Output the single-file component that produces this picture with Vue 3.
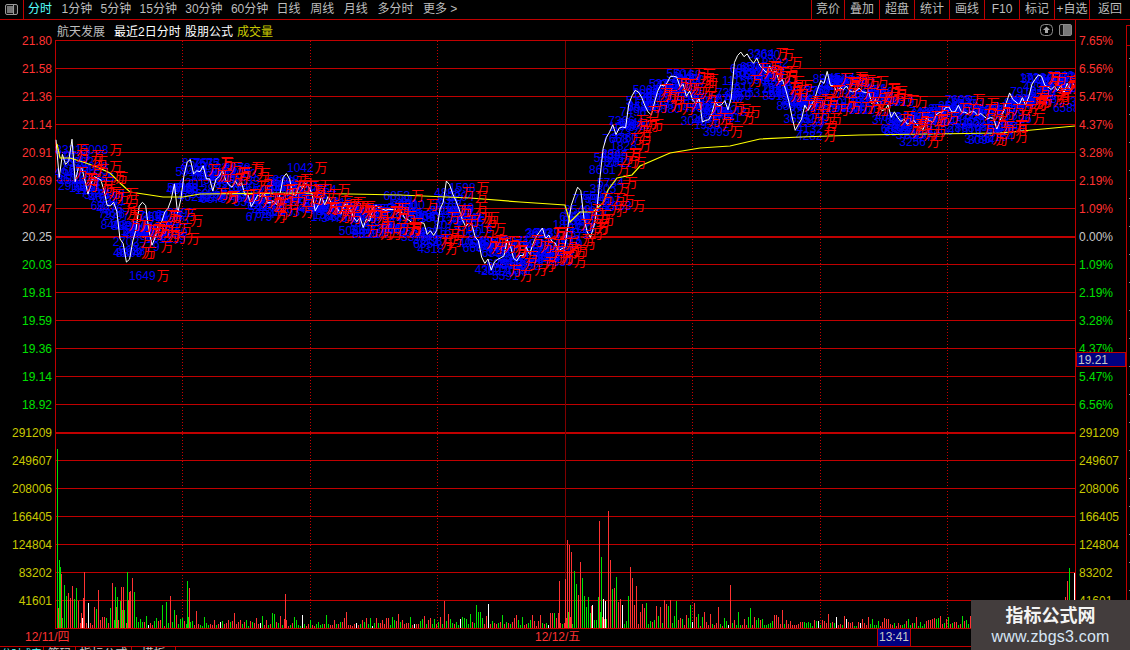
<script setup>
let seed = 73013
function r() {
  seed = (Math.imul(seed, 1664525) + 1013904223) >>> 0
  return ((seed >>> 8) & 0xffff) / 65536
}

const menu = ['1分钟', '5分钟', '15分钟', '30分钟', '60分钟', '日线', '周线', '月线', '多分时', '更多 >'].map((t) => ({
  t,
  digit: /^\d/.test(t),
}))
const tabs = ['竞价', '叠加', '超盘', '统计', '画线', 'F10', '标记', '+自选', '返回']
const prices = [
  ['21.80', 'up'], ['21.58', 'up'], ['21.36', 'up'], ['21.14', 'up'], ['20.91', 'up'], ['20.69', 'up'], ['20.47', 'up'],
  ['20.25', 'flat'], ['20.03', 'down'], ['19.81', 'down'], ['19.59', 'down'], ['19.36', 'down'], ['19.14', 'down'], ['18.92', 'down'],
]
const pct = [
  ['7.65%', 'up'], ['6.56%', 'up'], ['5.47%', 'up'], ['4.37%', 'up'], ['3.28%', 'up'], ['2.19%', 'up'], ['1.09%', 'up'],
  ['0.00%', 'flat'], ['1.09%', 'down'], ['2.19%', 'down'], ['3.28%', 'down'], ['4.37%', 'down'], ['5.47%', 'down'], ['6.56%', 'down'],
]
const vols = ['291209', '249607', '208006', '166405', '124804', '83202', '41601']

const hLines = Array.from({ length: 22 }, (_, i) => 40.5 + 28 * i)
const dotted = [182.5, 310.5, 437.5, 692.5, 820.5, 947.5]

const key = [
  [56, 142], [58, 195], [62, 150], [66, 172], [72, 142], [75, 182], [80, 163], [88, 190], [95, 170], [100, 176], [108, 205],
  [115, 198], [120, 235], [128, 268], [133, 240], [140, 205], [145, 200], [152, 245], [160, 222], [168, 212], [175, 186], [178, 215],
  [185, 168], [191, 156], [195, 176], [205, 170], [212, 190], [222, 170], [230, 185], [240, 180], [250, 205], [262, 196], [275, 206],
  [282, 190], [285, 162], [292, 196], [305, 182], [315, 206], [325, 200], [340, 210], [345, 203], [355, 216], [365, 226], [375, 205],
  [385, 206], [400, 211], [420, 225], [435, 236], [447, 180], [455, 196], [465, 226], [475, 231], [483, 262], [495, 266], [510, 240],
  [515, 262], [535, 245], [540, 224], [548, 240], [565, 250], [570, 205], [580, 180], [585, 225], [590, 236], [598, 205], [602, 156],
  [612, 120], [616, 132], [625, 125], [633, 88], [640, 100], [650, 112], [660, 90], [671, 73], [680, 86], [690, 96], [700, 102],
  [703, 125], [715, 105], [730, 105], [735, 62], [745, 52], [752, 60], [770, 70], [785, 86], [795, 128], [805, 110], [815, 100], [826, 73],
  [835, 92], [860, 90], [880, 105], [900, 118], [920, 128], [945, 106], [970, 115], [1000, 126], [1010, 95], [1025, 102], [1035, 75],
  [1050, 85], [1075, 90],
]
const avgKey = [
  [57, 144], [60, 158], [70, 158], [83, 162], [97, 167], [110, 173], [120, 183], [130, 192], [150, 195], [163, 197], [183, 197], [200, 194],
  [300, 193], [400, 195], [470, 198], [520, 202], [565, 205], [570, 222], [580, 212], [593, 212], [603, 203], [608, 190], [617, 178],
  [632, 175], [640, 166], [670, 153], [700, 148], [730, 146], [760, 139], [800, 137], [860, 135], [1000, 133], [1075, 126],
]
function interp(pts, x) {
  for (let i = 1; i < pts.length; i++) {
    if (x <= pts[i][0]) {
      const [a, b] = pts[i - 1]
      const [c, d] = pts[i]
      return b + ((d - b) * (x - a)) / (c - a)
    }
  }
  return pts[pts.length - 1][1]
}
const xs = []
for (let x = 56; x <= 1075; x += 2.125) xs.push(x)
const linePts = []
for (let x = 56; x <= 1075; x += 3.2) linePts.push(`${x.toFixed(1)},${(interp(key, x) + (r() - 0.5) * 11).toFixed(1)}`)
const pricePoints = linePts.join(' ')
const avgPoints = avgKey.map((p) => p.join(',')).join(' ')

function smooth(x) {
  let sum = 0
  let n = 0
  for (let d = -12; d <= 12; d += 2) {
    sum += interp(key, Math.max(56, Math.min(1075, x + d)))
    n++
  }
  return sum / n
}
const labels = []
for (let i = 0; i < xs.length; i += 1) {
  const x = xs[i]
  const y = smooth(x) + 9 + (r() - 0.5) * 34
  const cluster = Math.sin(x / 17) + Math.sin(x / 41) + 1 > 0
  labels.push({ id: i, x: x - 8 + (r() - 0.5) * 10, y, n: String(1000 + Math.floor(r() * 8000)), red: r() < (cluster ? 0.95 : 0.35) })
}
const named = [
  [75, 154, '13008'], [129, 280, '1649'], [193, 167, '7675'], [287, 172, '1042'], [449, 192, '1598'], [672, 83, '8189'], [703, 136, '3995'],
  [796, 140, '4282'], [828, 84, '2569'], [606, 167, '2011'], [605, 210, '1953'],
].map(([x, y, n], i) => ({ id: 'n' + i, x, y, n, red: true }))
const allLabels = [...labels, ...named]
const redLabels = allLabels.filter((l) => l.red)

const envKey = [
  [56, 45], [100, 32], [130, 38], [150, 14], [180, 22], [200, 9], [300, 10], [440, 9], [480, 14], [555, 14], [620, 30], [660, 18],
  [740, 12], [820, 9], [1075, 9],
]
const COLORS = { r: '#ff3232', g: '#00e000', w: '#ffffff' }
const fixed = {
  57: [449, 'g'], 59: [560, 'g'], 61: [574, 'r'], 64: [585, 'g'], 66: [596, 'g'], 68: [593, 'r'], 70: [598, 'r'], 72: [586, 'r'], 74: [599, 'g'],
  76: [588, 'g'], 78: [601, 'r'], 81: [613, 'r'], 83: [598, 'r'], 115: [587, 'g'], 117: [597, 'g'], 121: [587, 'r'], 123: [587, 'r'], 127: [572, 'g'], 129: [592, 'r'],
  170: [596, 'r'], 187: [581, 'g'], 189: [588, 'r'], 285: [594, 'r'], 444: [601, 'r'], 476: [605, 'g'], 559: [581, 'r'], 565: [579, 'r'], 567: [540, 'r'], 569: [545, 'r'], 571: [552, 'r'],
  574: [571, 'g'], 576: [584, 'g'], 578: [595, 'r'], 580: [562, 'r'], 582: [578, 'g'], 584: [596, 'g'], 586: [607, 'g'], 588: [597, 'g'], 591: [606, 'r'], 592: [605, 'w'],
  599: [521, 'r'], 601: [557, 'g'], 603: [599, 'w'], 605: [601, 'w'], 608: [511, 'r'], 610: [560, 'r'], 612: [589, 'g'], 614: [588, 'r'], 616: [577, 'g'], 618: [602, 'r'],
  620: [599, 'r'], 622: [605, 'w'], 630: [567, 'r'], 632: [578, 'r'], 636: [586, 'r'], 664: [600, 'r'], 666: [604, 'r'], 668: [606, 'g'], 670: [600, 'r'], 676: [601, 'g'], 730: [585, 'r'],
  1065: [597, 'r'], 1067: [581, 'r'], 1069: [568, 'g'], 1071: [605, 'g'], 1074: [573, 'w'],
}
const bars = []
for (let x = 57; x <= 1074; x++) {
  if (fixed[x]) {
    bars.push({ x, y: fixed[x][0], c: COLORS[fixed[x][1]] })
    continue
  }
  if (x % 2 === 1) continue
  const env = interp(envKey, x)
  const h = 2 + Math.floor(r() * r() * env * 1.6 + r() * env * 0.2)
  const t = r()
  bars.push({ x, y: 628 - h, c: t < 0.5 ? COLORS.r : t < 0.94 ? COLORS.g : COLORS.w })
}
</script>

<template>
  <div class="app">
    <div class="topbar">
      <div class="toggle">
        <svg width="14" height="12" viewBox="0 0 14 12">
          <rect x="0.5" y="0.5" width="12" height="10" rx="1.5" fill="#111" stroke="#9a9a9a" />
          <rect x="2" y="2" width="6" height="7" fill="#777" />
          <rect x="8" y="1" width="1" height="9" fill="#9a9a9a" />
        </svg>
      </div>
      <span class="menu-item active">分时</span>
      <span v-for="m in menu" :key="m.t" class="menu-item" :class="{ digit: m.digit }">{{ m.t }}</span>
      <div class="tabs">
        <span v-for="t in tabs" :key="t" class="tab">{{ t }}</span>
      </div>
    </div>

    <div class="body">
      <div class="axis left">
        <span v-for="p in prices" :key="p[0]" class="tick" :class="p[1]">{{ p[0] }}</span>
        <span v-for="v in vols" :key="v" class="tick vol">{{ v }}</span>
      </div>

      <div class="center">
        <div class="title">
          <span class="name">航天发展</span>
          <span class="white t1">最近2日分时</span>
          <span class="white t2">股朋公式</span>
          <span class="yellow t3">成交量</span>
          <div class="tools">
            <svg width="13" height="13" viewBox="0 0 13 13">
              <rect x="0.5" y="0.5" width="12" height="11" rx="4" fill="none" stroke="#8a8a8a" />
              <path d="M6.5 2.5 L10 6 H8 V9 H5 V6 H3 Z" fill="#a8a8a8" />
            </svg>
            <svg width="13" height="13" viewBox="0 0 13 13">
              <rect x="0.5" y="0.5" width="12" height="11" rx="1.5" fill="#111" stroke="#8a8a8a" />
              <rect x="4" y="1" width="1" height="10" fill="#8a8a8a" />
              <rect x="5" y="1" width="7" height="10" fill="#777" />
            </svg>
          </div>
        </div>
        <svg class="chart" width="1020" height="589" viewBox="55 40 1020 589">
          <line v-for="y in hLines" :key="y" x1="55" x2="1075" :y1="y" :y2="y" class="grid" />
          <line x1="55" x2="1075" y1="237" y2="237" class="grid thick" />
          <line x1="55" x2="1075" y1="433" y2="433" class="grid thick" />
          <line v-for="x in dotted" :key="x" :x1="x" :x2="x" y1="41" y2="628" class="dot" />
          <line x1="565.5" x2="565.5" y1="41" y2="628" class="cursor" />
          <line x1="55.5" x2="55.5" y1="40" y2="628" class="grid" />
          <rect v-for="b in bars" :key="b.x" :x="b.x" :y="b.y" width="1" :height="628 - b.y" :fill="b.c" shape-rendering="crispEdges" />
          <text v-for="l in allLabels" :key="'b' + l.id" :x="l.x" :y="l.y" class="num">{{ l.n }}</text>
          <polyline :points="pricePoints" class="price" />
          <polyline :points="avgPoints" class="avg" />
          <text v-for="l in redLabels" :key="'r' + l.id" :x="l.x + l.n.length * 6.9" :y="l.y" class="wan">万</text>
        </svg>
      </div>

      <div class="axis right">
        <span v-for="p in pct" :key="p[0] + p[1]" class="tick" :class="p[1]">{{ p[0] }}</span>
        <span v-for="v in vols" :key="v" class="tick vol">{{ v }}</span>
        <div class="cur-price">19.21</div>
      </div>
      <div class="strip"></div>
    </div>

    <div class="dates">
      <span class="date first">12/11/四</span>
      <span class="date second">12/12/五</span>
      <span class="time-tag">13:41</span>
    </div>
    <div class="bottom-tabs">
      <span class="btab b1">分时成交</span>
      <span class="btab b2">筹码</span>
      <span class="btab b3">指标公式</span>
      <span class="btab b4">模板</span>
    </div>

    <div class="mark">
      <div class="mark-title">指标公式网</div>
      <div class="mark-url">www.zbgs3.com</div>
    </div>
  </div>
</template>

<style>
html, body { margin: 0; background: #000; }
</style>

<style scoped>
.app {
  position: relative;
  width: 1130px;
  height: 650px;
  overflow: hidden;
  background: #000;
  font-family: "Liberation Sans", "Noto Sans CJK SC", sans-serif;
  font-size: 12px;
  color: #bdbdbd;
}
.topbar {
  display: flex;
  align-items: center;
  height: 19px;
  border-bottom: 1px solid #c00000;
}
.toggle {
  display: flex;
  align-items: center;
  justify-content: center;
  width: 23px;
  height: 19px;
  border-right: 1px solid #c00000;
  margin-right: 4px;
  box-sizing: content-box;
  flex: none;
}
.toggle svg { margin-left: 1px; }
.menu-item { margin-right: 9.6px; line-height: 19px; white-space: nowrap; }
.menu-item.digit { margin-right: 8.3px; }
.menu-item.active { color: #55ffff; }
.tabs { display: flex; margin-left: auto; height: 19px; }
.tab {
  width: 34px;
  border-left: 1px solid #c00000;
  text-align: center;
  line-height: 19px;
  white-space: nowrap;
}
.tab:last-child { width: 40px; }
.tab:first-child { width: 32px; }
.body { display: flex; height: 609px; }
.axis { display: flex; flex-direction: column; flex: none; padding-top: 7px; }
.axis.left { width: 55px; box-sizing: border-box; padding-right: 3px; align-items: flex-end; }
.axis.right { position: relative; width: 50px; box-sizing: border-box; padding-left: 3px; }
.tick { height: 28px; line-height: 28px; flex: none; }
.up { color: #ff3232; }
.flat { color: #c8c8c8; }
.down { color: #00e000; }
.vol { color: #c8c800; }
.center {
  display: flex;
  flex-direction: column;
  width: 1021px;
  box-sizing: border-box;
  border-right: 1px solid #c00000;
  flex: none;
}
.title { display: flex; align-items: center; height: 20px; padding-left: 2px; }
.name { color: #bdbdbd; width: 57px; }
.white { color: #ffffff; }
.t1 { width: 71px; }
.t2 { width: 52px; }
.yellow { color: #c8c800; }
.tools { display: flex; gap: 6px; margin-left: auto; padding-right: 3px; height: 13px; }
.chart { display: block; overflow: hidden; }
.grid { stroke: #c00000; stroke-width: 1; }
.grid.thick { stroke-width: 2; }
.dot { stroke: #c80000; stroke-width: 1; stroke-dasharray: 1 2; }
.cursor { stroke: #800000; stroke-width: 1; }
.num { fill: #0000ff; font-size: 12px; }
.wan { fill: #ff0000; font-size: 13px; }
.price { fill: none; stroke: #ffffff; stroke-width: 1; }
.avg { fill: none; stroke: #ffff00; stroke-width: 1.2; }
.cur-price {
  position: absolute;
  left: 0;
  top: 332px;
  width: 50px;
  height: 15px;
  box-sizing: border-box;
  border: 1px solid #c00000;
  background: #000080;
  color: #c8c8c8;
  padding-left: 1px;
  line-height: 14px;
}
.strip {
  flex: none;
  width: 4px;
  margin-top: 5px;
  box-sizing: border-box;
  border-left: 1px solid #c00000;
  border-top: 1px solid #c00000;
  background-image:
    linear-gradient(#c00000, #c00000),
    repeating-linear-gradient(to bottom, #000 0 27px, #888 27px 28px);
  background-size: 100% 1px, 1px 100%;
  background-position: 0 19px, 2px 5px;
  background-repeat: no-repeat, repeat-y;
}
.dates {
  position: relative;
  display: flex;
  height: 17px;
  border-bottom: 1px solid #c00000;
  line-height: 16px;
  color: #ff3232;
}
.date.first { margin-left: 25px; width: 510px; }
.time-tag {
  position: absolute;
  left: 877px;
  top: 0;
  width: 34px;
  height: 17px;
  box-sizing: border-box;
  border-left: 1px solid #c00000;
  border-right: 1px solid #c00000;
  background: #000080;
  color: #c8c8c8;
  text-align: center;
  line-height: 16px;
}
.bottom-tabs { display: flex; height: 3px; overflow: hidden; }
.btab {
  display: block;
  box-sizing: border-box;
  height: 3px;
  border-right: 1px solid #c00000;
  line-height: 14px;
  text-align: center;
  white-space: nowrap;
  color: #c8c8c8;
}
.b1 { width: 44px; color: #55ffff; font-size: 10px; }
.b2 { width: 32px; }
.b3 { width: 56px; }
.b4 { width: 44px; }
.mark {
  position: absolute;
  left: 971px;
  top: 600px;
  width: 159px;
  height: 50px;
  background: #433d3d;
  text-align: center;
}
.mark-title { color: #f4f4f4; font-size: 18px; font-weight: 700; line-height: 22px; margin-top: 5px; }
.mark-url { color: #d7e6f5; font-size: 16px; line-height: 20px; letter-spacing: 0.2px; }
</style>
